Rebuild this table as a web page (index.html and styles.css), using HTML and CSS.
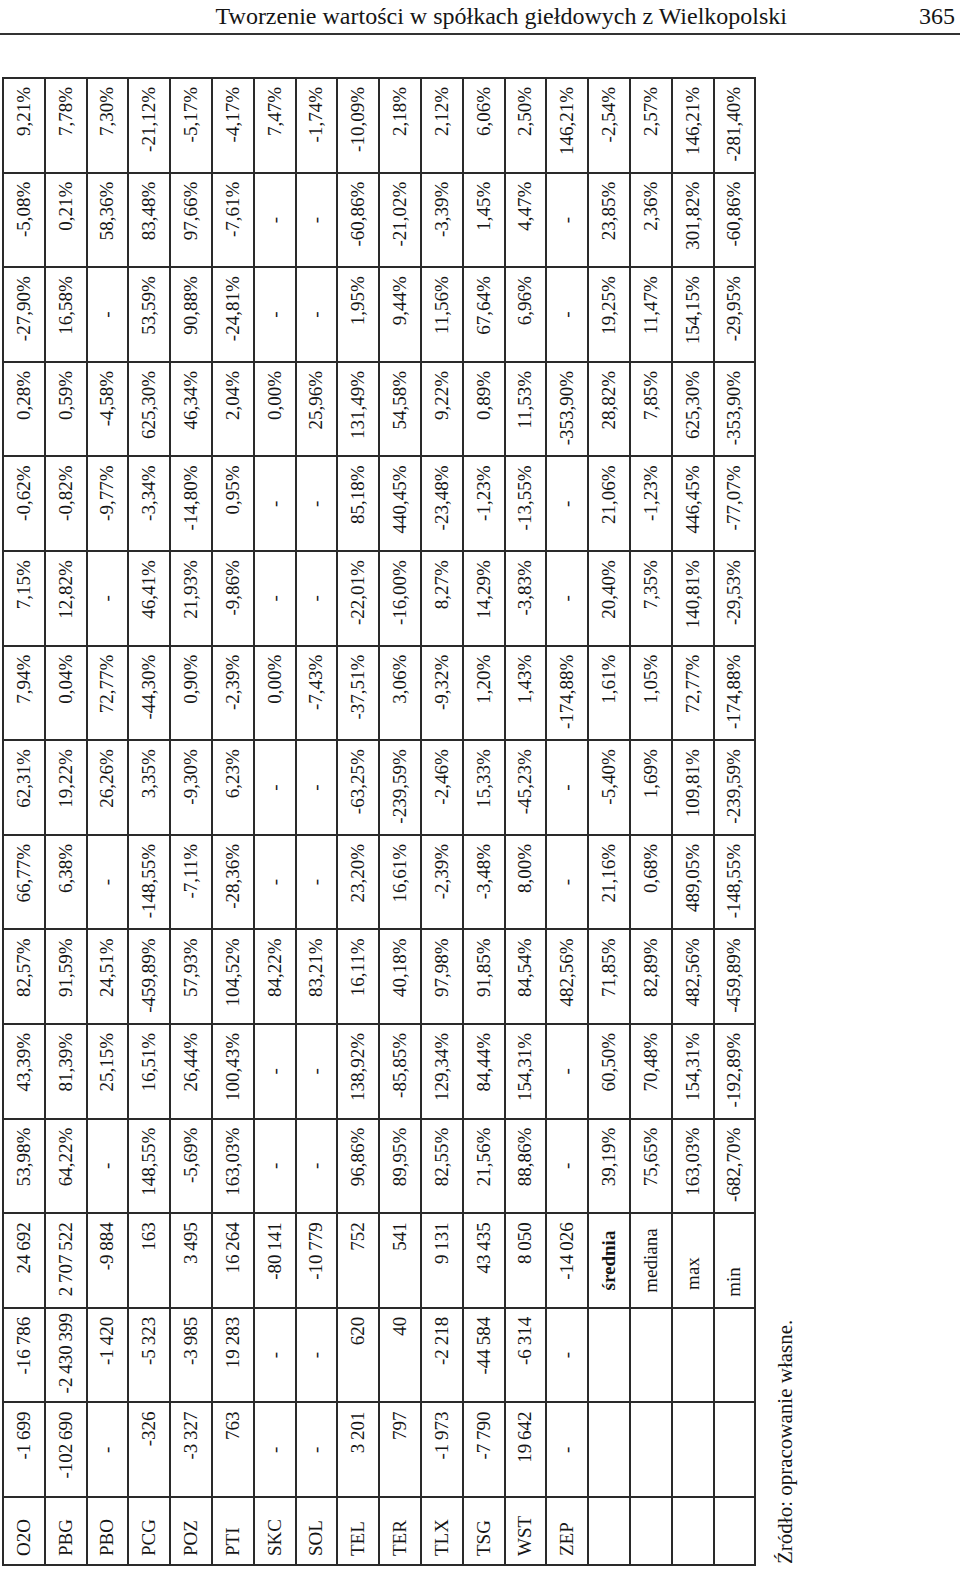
FILE: index.html
```html
<!DOCTYPE html>
<html lang="pl">
<head>
<meta charset="utf-8">
<link rel="stylesheet" href="styles.css">
</head>
<body>
<header class="running-head">
  <span class="head-title">Tworzenie wartości w spółkach giełdowych z Wielkopolski</span>
  <span class="head-page">365</span>
</header>
<div class="landscape">
  <div class="landscape-inner">
    <table class="data">
      <colgroup><col class="c-label"><col span="15"></colgroup>
      <tbody>
        <tr><td class="l">O2O</td><td>-1&#8201;699</td><td>-16&#8201;786</td><td>24&#8201;692</td><td>53,98%</td><td>43,39%</td><td>82,57%</td><td>66,77%</td><td>62,31%</td><td>7,94%</td><td>7,15%</td><td>-0,62%</td><td>0,28%</td><td>-27,90%</td><td>-5,08%</td><td>9,21%</td></tr>
        <tr><td class="l">PBG</td><td>-102&#8201;690</td><td>-2&#8201;430&#8201;399</td><td>2&#8201;707&#8201;522</td><td>64,22%</td><td>81,39%</td><td>91,59%</td><td>6,38%</td><td>19,22%</td><td>0,04%</td><td>12,82%</td><td>-0,82%</td><td>0,59%</td><td>16,58%</td><td>0,21%</td><td>7,78%</td></tr>
        <tr><td class="l">PBO</td><td class="d">-</td><td>-1&#8201;420</td><td>-9&#8201;884</td><td class="d">-</td><td>25,15%</td><td>24,51%</td><td class="d">-</td><td>26,26%</td><td>72,77%</td><td class="d">-</td><td>-9,77%</td><td>-4,58%</td><td class="d">-</td><td>58,36%</td><td>7,30%</td></tr>
        <tr><td class="l">PCG</td><td>-326</td><td>-5&#8201;323</td><td>163</td><td>148,55%</td><td>16,51%</td><td>-459,89%</td><td>-148,55%</td><td>3,35%</td><td>-44,30%</td><td>46,41%</td><td>-3,34%</td><td>625,30%</td><td>53,59%</td><td>83,48%</td><td>-21,12%</td></tr>
        <tr><td class="l">POZ</td><td>-3&#8201;327</td><td>-3&#8201;985</td><td>3&#8201;495</td><td>-5,69%</td><td>26,44%</td><td>57,93%</td><td>-7,11%</td><td>-9,30%</td><td>0,90%</td><td>21,93%</td><td>-14,80%</td><td>46,34%</td><td>90,88%</td><td>97,66%</td><td>-5,17%</td></tr>
        <tr><td class="l">PTI</td><td>763</td><td>19&#8201;283</td><td>16&#8201;264</td><td>163,03%</td><td>100,43%</td><td>104,52%</td><td>-28,36%</td><td>6,23%</td><td>-2,39%</td><td>-9,86%</td><td>0,95%</td><td>2,04%</td><td>-24,81%</td><td>-7,61%</td><td>-4,17%</td></tr>
        <tr><td class="l">SKC</td><td class="d">-</td><td class="d">-</td><td>-80&#8201;141</td><td class="d">-</td><td class="d">-</td><td>84,22%</td><td class="d">-</td><td class="d">-</td><td>0,00%</td><td class="d">-</td><td class="d">-</td><td>0,00%</td><td class="d">-</td><td class="d">-</td><td>7,47%</td></tr>
        <tr><td class="l">SOL</td><td class="d">-</td><td class="d">-</td><td>-10&#8201;779</td><td class="d">-</td><td class="d">-</td><td>83,21%</td><td class="d">-</td><td class="d">-</td><td>-7,43%</td><td class="d">-</td><td class="d">-</td><td>25,96%</td><td class="d">-</td><td class="d">-</td><td>-1,74%</td></tr>
        <tr><td class="l">TEL</td><td>3&#8201;201</td><td>620</td><td>752</td><td>96,86%</td><td>138,92%</td><td>16,11%</td><td>23,20%</td><td>-63,25%</td><td>-37,51%</td><td>-22,01%</td><td>85,18%</td><td>131,49%</td><td>1,95%</td><td>-60,86%</td><td>-10,09%</td></tr>
        <tr><td class="l">TER</td><td>797</td><td>40</td><td>541</td><td>89,95%</td><td>-85,85%</td><td>40,18%</td><td>16,61%</td><td>-239,59%</td><td>3,06%</td><td>-16,00%</td><td>440,45%</td><td>54,58%</td><td>9,44%</td><td>-21,02%</td><td>2,18%</td></tr>
        <tr><td class="l">TLX</td><td>-1&#8201;973</td><td>-2&#8201;218</td><td>9&#8201;131</td><td>82,55%</td><td>129,34%</td><td>97,98%</td><td>-2,39%</td><td>-2,46%</td><td>-9,32%</td><td>8,27%</td><td>-23,48%</td><td>9,22%</td><td>11,56%</td><td>-3,39%</td><td>2,12%</td></tr>
        <tr><td class="l">TSG</td><td>-7&#8201;790</td><td>-44&#8201;584</td><td>43&#8201;435</td><td>21,56%</td><td>84,44%</td><td>91,85%</td><td>-3,48%</td><td>15,33%</td><td>1,20%</td><td>14,29%</td><td>-1,23%</td><td>0,89%</td><td>67,64%</td><td>1,45%</td><td>6,06%</td></tr>
        <tr><td class="l">WST</td><td>19&#8201;642</td><td>-6&#8201;314</td><td>8&#8201;050</td><td>88,86%</td><td>154,31%</td><td>84,54%</td><td>8,00%</td><td>-45,23%</td><td>1,43%</td><td>-3,83%</td><td>-13,55%</td><td>11,53%</td><td>6,96%</td><td>4,47%</td><td>2,50%</td></tr>
        <tr><td class="l">ZEP</td><td class="d">-</td><td class="d">-</td><td>-14&#8201;026</td><td class="d">-</td><td class="d">-</td><td>482,56%</td><td class="d">-</td><td class="d">-</td><td>-174,88%</td><td class="d">-</td><td class="d">-</td><td>-353,90%</td><td class="d">-</td><td class="d">-</td><td>146,21%</td></tr>
        <tr><td></td><td></td><td></td><td class="stat b">średnia</td><td>39,19%</td><td>60,50%</td><td>71,85%</td><td>21,16%</td><td>-5,40%</td><td>1,61%</td><td>20,40%</td><td>21,06%</td><td>28,82%</td><td>19,25%</td><td>23,85%</td><td>-2,54%</td></tr>
        <tr><td></td><td></td><td></td><td class="stat">mediana</td><td>75,65%</td><td>70,48%</td><td>82,89%</td><td>0,68%</td><td>1,69%</td><td>1,05%</td><td>7,35%</td><td>-1,23%</td><td>7,85%</td><td>11,47%</td><td>2,36%</td><td>2,57%</td></tr>
        <tr><td></td><td></td><td></td><td class="stat s-max">max</td><td>163,03%</td><td>154,31%</td><td>482,56%</td><td>489,05%</td><td>109,81%</td><td>72,77%</td><td>140,81%</td><td>446,45%</td><td>625,30%</td><td>154,15%</td><td>301,82%</td><td>146,21%</td></tr>
        <tr><td></td><td></td><td></td><td class="stat s-min">min</td><td>-682,70%</td><td>-192,89%</td><td>-459,89%</td><td>-148,55%</td><td>-239,59%</td><td>-174,88%</td><td>-29,53%</td><td>-77,07%</td><td>-353,90%</td><td>-29,95%</td><td>-60,86%</td><td>-281,40%</td></tr>
      </tbody>
    </table>
    <p class="source">Źródło: opracowanie własne.</p>
  </div>
</div>
</body>
</html>
```
FILE: styles.css
```css
html, body {
  margin: 0;
  padding: 0;
  background: #ffffff;
  overflow: hidden;
}
body {
  font-family: "Liberation Serif", "DejaVu Serif", serif;
  color: #151515;
}
.running-head {
  display: flex;
  justify-content: flex-end;
  align-items: baseline;
  height: 35px;
  box-sizing: border-box;
  padding: 2px 5px 0 0;
  border-bottom: 2px solid #333333;
  font-size: 24px;
  line-height: 28px;
}
.head-page {
  margin-left: 132px;
}
.landscape {
  margin: 42px 0 0 2px;
  width: 800px;
  height: 1489px;
}
.landscape-inner {
  width: 1489px;
  transform-origin: 0 0;
  transform: rotate(-90deg) translateX(-100%);
}
.data {
  width: 1489px;
  height: 752px;
  table-layout: fixed;
  border-collapse: collapse;
  font-size: 19px;
}
.data col.c-label {
  width: 68px;
}
.data td {
  border: 2px solid #2a2a2a;
  padding: 0 8px;
  text-align: right;
  vertical-align: middle;
  white-space: nowrap;
  height: 41.8px;
  box-sizing: border-box;
}
.data td.l {
  text-align: left;
}
.data td.d {
  text-align: center;
}
.data td.stat {
  text-align: center;
}
.data td.s-max {
  padding-left: 0;
  padding-right: 26px;
}
.data td.s-min {
  text-align: left;
  padding-left: 10px;
}
.data td.b {
  font-weight: bold;
}
.source {
  margin: 16px 0 0 2px;
  font-size: 21px;
  line-height: 26px;
}
```
